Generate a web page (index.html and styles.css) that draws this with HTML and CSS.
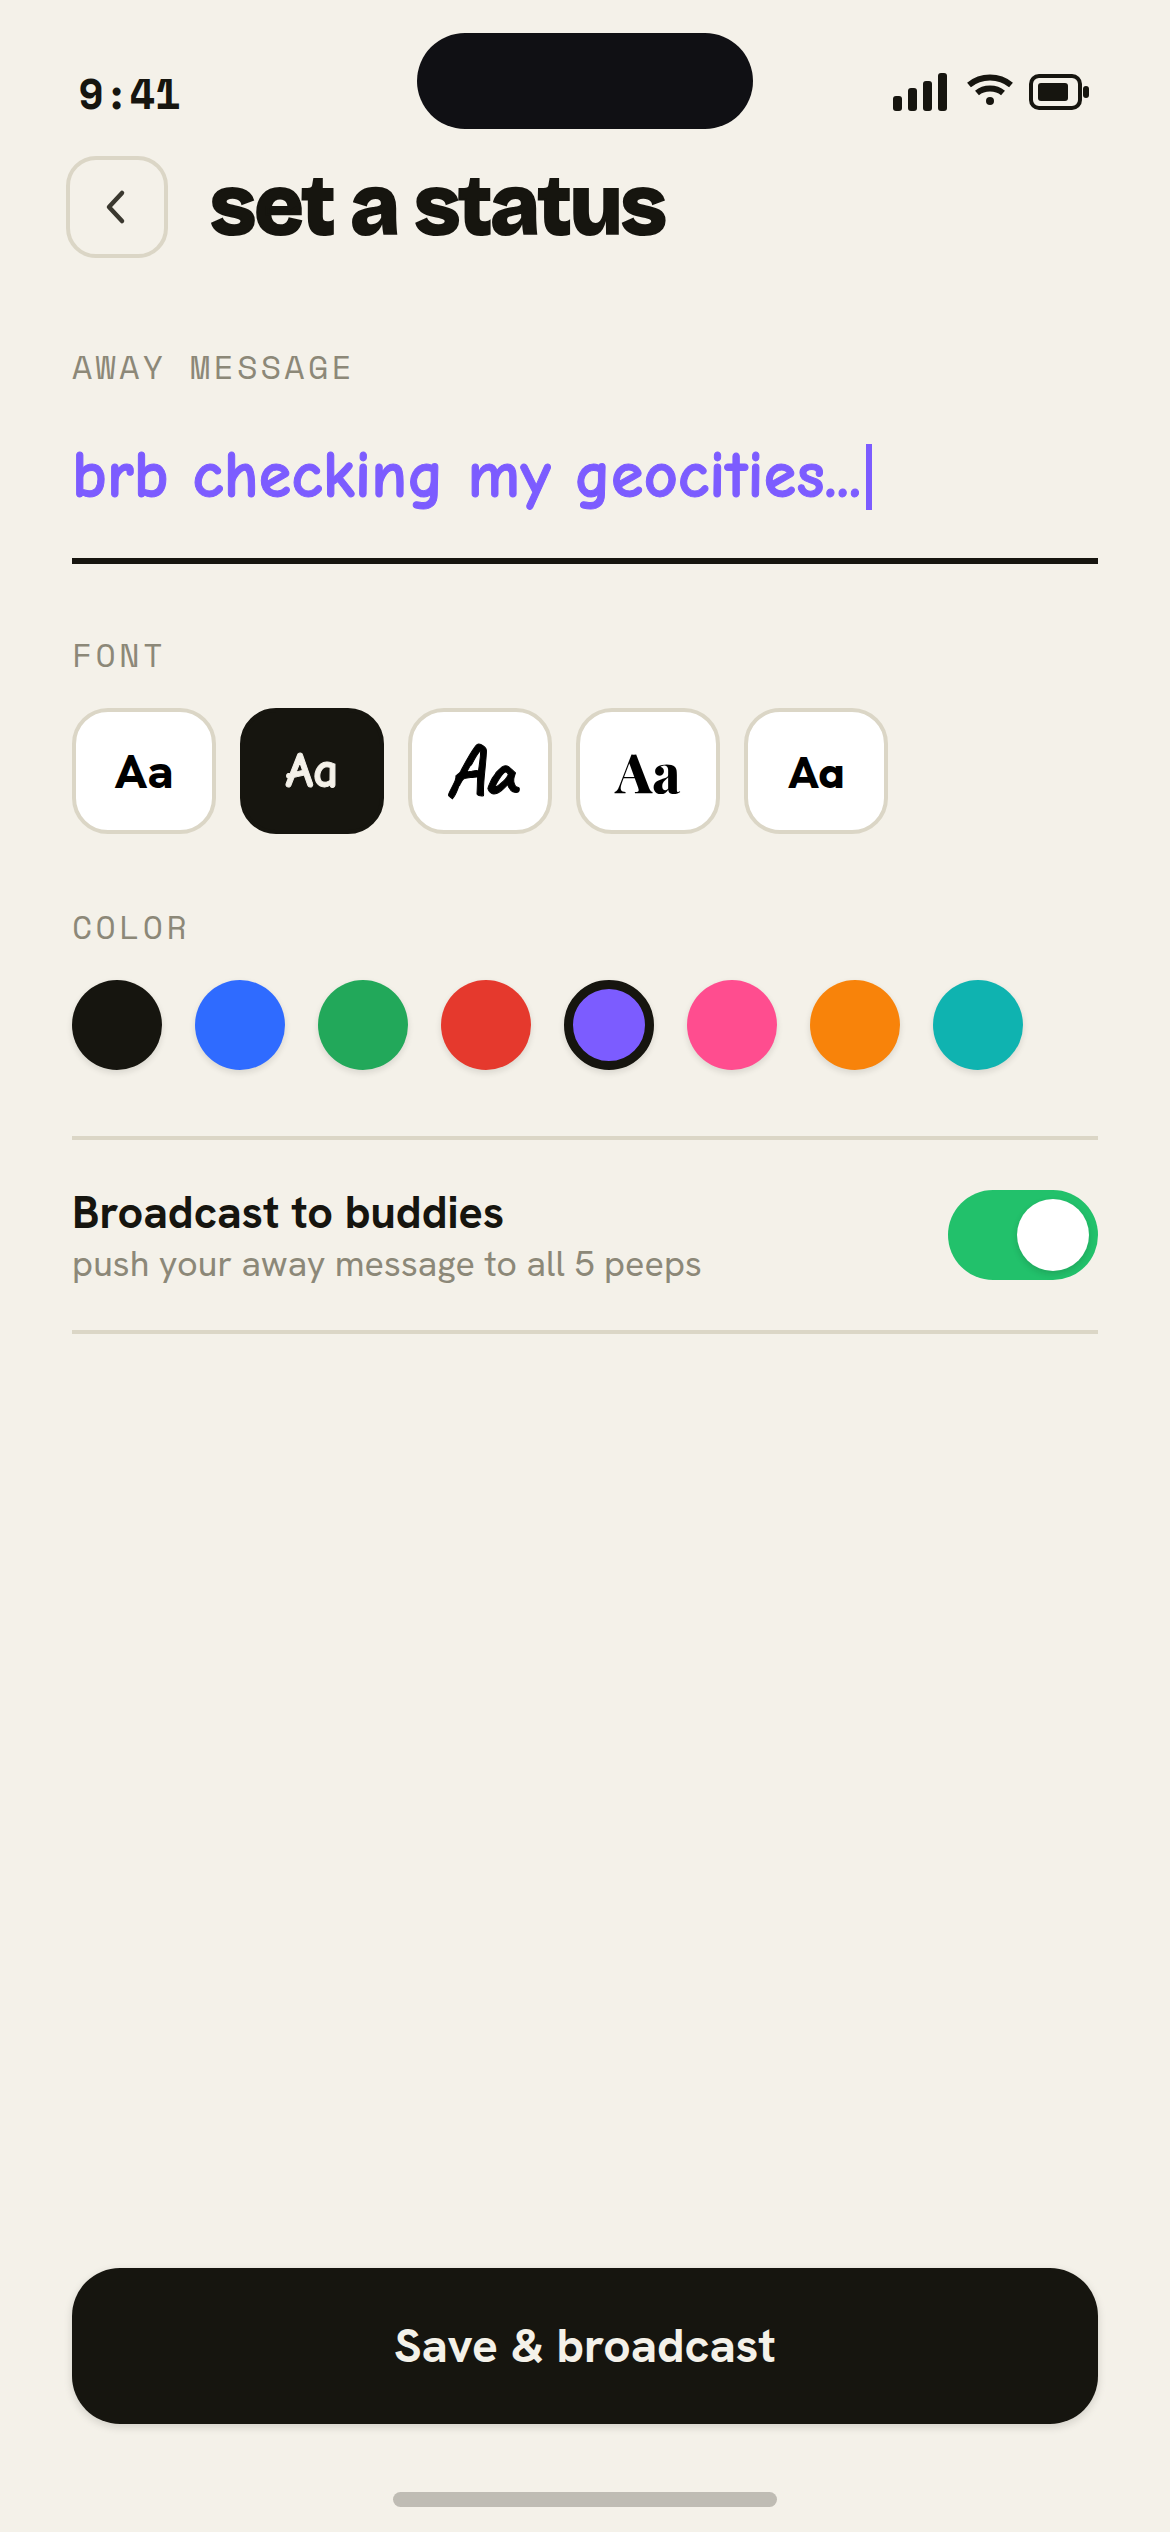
FILE: index.html
```html
<!DOCTYPE html>
<html lang="en">
<head>
<meta charset="utf-8">
<title>set a status</title>
<link rel="stylesheet" href="styles.css">
</head>
<body>
<div class="screen">
  <div class="island"></div>
  <div class="status">
    <span class="time">9:41</span>
    <div class="status-icons">
      <svg class="signal" width="54" height="38" viewBox="0 0 54 38"><rect x="0" y="23" width="9" height="15" rx="3"/><rect x="15" y="15" width="9" height="23" rx="3"/><rect x="30" y="8" width="9" height="30" rx="3"/><rect x="45" y="0" width="9" height="38" rx="3"/></svg>
      <svg class="wifi" width="46" height="32" viewBox="0 0 46 32"><path d="M2 11 C14 1 32 1 44 11" /><path d="M10 19 C17 13 29 13 36 19"/><circle cx="23" cy="27" r="4"/></svg>
      <svg class="battery" width="60" height="36" viewBox="0 0 60 36"><rect x="2" y="2" width="49" height="32" rx="8" class="batt-shell"/><rect x="9" y="9" width="30" height="18" rx="3"/><rect x="54" y="12" width="6" height="12" rx="3"/></svg>
    </div>
  </div>
  <header class="top">
    <button class="back"><svg width="30" height="36" viewBox="0 0 30 36"><path d="M20 4 L7 18 L20 32"/></svg></button>
    <h1 class="title">set a status</h1>
  </header>
  <div class="label label-away">AWAY MESSAGE</div>
  <div class="message"><span>brb checking my geocities...</span><i class="caret"></i></div>
  <div class="label label-font">FONT</div>
  <div class="fonts">
    <div class="tile f1">Aa</div>
    <div class="tile tile-on f2">Aa</div>
    <div class="tile f3">Aa</div>
    <div class="tile f4">Aa</div>
    <div class="tile f5">Aa</div>
  </div>
  <div class="label label-color">COLOR</div>
  <div class="colors">
    <div class="dot c1"></div>
    <div class="dot c2"></div>
    <div class="dot c3"></div>
    <div class="dot c4"></div>
    <div class="dot c5 dot-on"></div>
    <div class="dot c6"></div>
    <div class="dot c7"></div>
    <div class="dot c8"></div>
  </div>
  <div class="row">
    <div class="row-text">
      <div class="row-title">Broadcast to buddies</div>
      <div class="row-sub">push your away message to all 5 peeps</div>
    </div>
    <div class="toggle"><div class="knob"></div></div>
  </div>
  <div class="spacer"></div>
  <button class="save">Save &amp; broadcast</button>
  <div class="home"></div>
</div>
</body>
</html>
```
FILE: styles.css
```css
* { box-sizing: border-box; }
html, body { margin: 0; padding: 0; }
body { background: #f4f1e9; color: #16150f; font-family: "Hanken Grotesk", "DM Sans", "Lato", sans-serif; }
.screen { position: relative; width: 1170px; height: 2532px; display: flex; flex-direction: column; padding: 0 72px; overflow: hidden; }
.island { position: absolute; left: 417px; top: 33px; width: 336px; height: 96px; border-radius: 48px; background: #101014; }
.status { height: 156px; padding: 73px 22px 0 6px; display: flex; justify-content: space-between; align-items: flex-start; }
.time { font: 700 42px/40px "Space Mono", "Liberation Mono", monospace; }
.status-icons { display: flex; align-items: flex-start; gap: 20px; margin-left: auto; margin-right: -13px; }
.status-icons svg { fill: #16150f; display: block; }
.wifi path { fill: none; stroke: #16150f; stroke-width: 6; }
.wifi { margin-top: 1px; }
.battery { margin-top: 1px; margin-left: -4px; }
.batt-shell { fill: none; stroke: #16150f; stroke-width: 4; }
.top { height: 102px; display: flex; align-items: center; gap: 42px; margin-left: -6px; }
.back { width: 102px; height: 102px; border: 4px solid #dbd6c6; border-radius: 30px; background: transparent; padding: 0; display: flex; align-items: center; justify-content: center; }
.back svg { fill: none; stroke: #3a382f; stroke-width: 4.5; stroke-linecap: round; stroke-linejoin: round; }
.title { margin: 0; font: 800 84px/102px "Bricolage Grotesque", "Inter", sans-serif; letter-spacing: -2.2px; -webkit-text-stroke: 2px #16150f; }
.label { font: 400 33px/40px "Space Mono", "Liberation Mono", monospace; letter-spacing: 3.4px; color: #8c8878; }
.label-away { margin-top: 89px; }
.message { margin-top: 49px; height: 128px; padding-top: 4px; border-bottom: 6px solid #16150f; display: flex; align-items: flex-start; color: #7c5cff; font: 700 66px/72px "Comic Neue", "Comic Sans MS", "Lato", sans-serif; letter-spacing: .25px; -webkit-text-stroke: 1px #7c5cff; }
.caret { display: block; width: 6px; height: 66px; margin-top: 4px; margin-left: 5px; background: #7c5cff; }
.label-font { margin-top: 71px; }
.fonts { display: flex; gap: 24px; margin-top: 33px; }
.tile { width: 144px; height: 126px; border: 4px solid #dbd6c6; border-radius: 36px; background: #fff; color: #000; display: flex; align-items: center; justify-content: center; font-size: 48px; font-weight: 800; }
.tile-on { background: #16150f; border-color: #16150f; color: #f4f1e9; }
.f1 { font-family: "Hanken Grotesk", "DM Sans", "Inter", sans-serif; }
.f2 { font-family: "Comic Neue", "Lato", sans-serif; font-size: 50px; -webkit-text-stroke: 1px #f4f1e9; }
.f3 { font-family: "Caveat", "Permanent Marker", cursive; font-size: 72px; -webkit-text-stroke: 1px #000; }
.f4 { font-family: "Playfair Display", "Liberation Serif", serif; font-size: 54px; font-weight: 800; }
.f5 { font-family: "Outfit", "Space Grotesk", monospace; font-size: 44px; font-weight: 700; }
.label-color { margin-top: 73px; }
.colors { display: flex; gap: 33px; margin-top: 33px; padding-bottom: 66px; border-bottom: 4px solid #dbd6c6; }
.dot { width: 90px; height: 90px; border-radius: 50%; box-shadow: 0 3px 6px rgba(22,21,15,.12); }
.c1 { background: #16150f; }
.c2 { background: #2f6bff; }
.c3 { background: #22a85a; }
.c4 { background: #e5392d; }
.c5 { background: #7c5cff; }
.c6 { background: #ff4d8f; }
.c7 { background: #f8830a; }
.c8 { background: #0fb3b0; }
.dot-on { border: 9px solid #16150f; }
.row { height: 194px; display: flex; align-items: center; justify-content: space-between; border-bottom: 4px solid #dbd6c6; }
.row-text { padding-top: 3px; }
.row-title { font: 700 45px/52px "Hanken Grotesk", "DM Sans", "Lato", sans-serif; }
.row-sub { margin-top: 3px; font: 400 36px/44px "Hanken Grotesk", "DM Sans", "Lato", sans-serif; color: #8c8878; }
.toggle { width: 150px; height: 90px; border-radius: 45px; background: #22c16b; padding: 9px; display: flex; justify-content: flex-end; }
.knob { width: 72px; height: 72px; border-radius: 50%; background: #fff; box-shadow: 0 3px 6px rgba(22,21,15,.15); }
.spacer { flex: 1; }
.save { height: 156px; border: 0; border-radius: 48px; background: #16150f; color: #f4f1e9; font: 700 48px/1 "Hanken Grotesk", "DM Sans", "Lato", sans-serif; box-shadow: 0 3px 9px rgba(22,21,15,.15); }
.home { align-self: center; width: 384px; height: 15px; border-radius: 8px; background: #bfbcb4; margin-top: 68px; margin-bottom: 25px; }
```
